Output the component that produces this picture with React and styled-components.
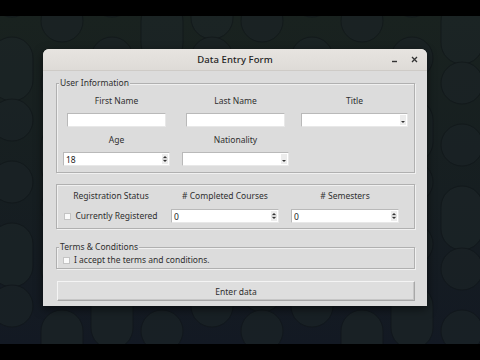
import React from "react";
import styled, { createGlobalStyle } from "styled-components";

const Global = createGlobalStyle`
  html, body { margin: 0; padding: 0; background: #000; }
  body { font-family: "Noto Sans", "Open Sans", sans-serif; }
`;

const Page = styled.div`
  width: 480px;
  height: 360px;
  display: flex;
  flex-direction: column;
  background: #000;
  overflow: hidden;
`;

const Band = styled.div`
  height: ${(p) => p.$h}px;
  background: #000;
  flex: none;
`;

const Desktop = styled.div`
  position: relative;
  flex: 1;
  background: linear-gradient(180deg, #19221f 0%, #161e21 55%, #131923 100%);
  padding: 33px 0 0 43px;
  overflow: hidden;
`;

const Wallpaper = styled.svg`
  position: absolute;
  inset: 0;
  width: 100%;
  height: 100%;
`;

const Window = styled.div`
  position: relative;
  width: 384px;
  height: 257px;
  background: #dcdcdc;
  border-radius: 6px 6px 0 0;
  box-shadow: 0 3px 10px rgba(0, 0, 0, 0.55);
  display: flex;
  flex-direction: column;
  color: #2f2f2f;
`;

const TitleBar = styled.div`
  height: 21px;
  flex: none;
  display: grid;
  grid-template-columns: 1fr auto 1fr;
  align-items: center;
  background: linear-gradient(180deg, #e7e4e0, #dedbd7);
  border-bottom: 1px solid #cecbc7;
  border-radius: 6px 6px 0 0;
`;

const Title = styled.div`
  grid-column: 2;
  font-size: 9.5px;
  font-weight: 500;
  color: #1e1e1e;
  letter-spacing: 0.1px;
`;

const Controls = styled.div`
  grid-column: 3;
  justify-self: end;
  display: flex;
  align-items: center;
  gap: 13px;
  padding-right: 9px;
`;

const Body = styled.div`
  flex: 1;
  display: flex;
  flex-direction: column;
  padding: 12px 12px 0 13px;
  font-size: 8.5px;
`;

const Frame = styled.div`
  position: relative;
  border: 1px solid #b0b0b0;
  box-shadow: inset 1px 1px 0 #f0f0f0, 1px 1px 0 #f0f0f0;
  height: ${(p) => p.$h}px;
  margin-top: ${(p) => p.$mt || 0}px;
  box-sizing: border-box;
`;

const Legend = styled.span`
  position: absolute;
  left: 2px;
  top: -7px;
  line-height: 12px;
  padding: 0 1px;
  background: #dcdcdc;
  font-size: 8.5px;
  color: #2f2f2f;
`;

const Grid = styled.div`
  display: grid;
  grid-template-columns: ${(p) => p.$cols};
  grid-template-rows: ${(p) => p.$rows};
  row-gap: ${(p) => p.$gap}px;
  padding-top: ${(p) => p.$pt}px;
  justify-items: center;
  align-items: center;
`;

const Label = styled.div`
  font-size: 8.5px;
  line-height: 12px;
  color: #2f2f2f;
`;

const Entry = styled.div`
  width: ${(p) => p.$w}px;
  height: ${(p) => p.$h || 14}px;
  box-sizing: border-box;
  background: #fff;
  border: 1px solid #b9b9b9;
  border-right-color: #e8e8e8;
  border-bottom-color: #e8e8e8;
  display: flex;
  align-items: center;
  position: relative;
  font-size: 8.5px;
  color: #222;
  padding-left: 2px;
`;

const ArrowBox = styled.div`
  position: absolute;
  right: 1px;
  top: 1px;
  bottom: 1px;
  width: 6px;
  background: #ececec;
  display: flex;
  flex-direction: column;
  align-items: center;
  justify-content: ${(p) => (p.$spin ? "center" : "flex-end")};
`;

const CheckRow = styled.div`
  display: flex;
  align-items: center;
  gap: 4px;
  justify-self: ${(p) => (p.$start ? "start" : "center")};
  padding-left: ${(p) => p.$pl || 0}px;
`;

const Box = styled.span`
  width: 7px;
  height: 7px;
  background: #fafafa;
  border: 1px solid #c4c4c4;
  box-sizing: border-box;
  display: inline-block;
`;

const Button = styled.div`
  margin-top: 12px;
  margin-left: 1px;
  height: 20px;
  box-sizing: border-box;
  background: #dedede;
  border: 1px solid #a8a8a8;
  border-top-color: #f4f4f4;
  border-left-color: #f4f4f4;
  box-shadow: inset -1px -1px 0 #c6c6c6;
  display: flex;
  align-items: center;
  justify-content: center;
  font-size: 8.5px;
  color: #2f2f2f;
`;

function SpinArrows() {
  return (
    <ArrowBox $spin>
      <svg width="6" height="10" viewBox="0 0 6 10">
        <path d="M1 4 L3 2 L5 4 Z" fill="#333" />
        <path d="M0.5 5 H5.5" stroke="#999" strokeWidth="0.6" />
        <path d="M1 6 L3 8 L5 6 Z" fill="#333" />
      </svg>
    </ArrowBox>
  );
}

function ComboArrow() {
  return (
    <ArrowBox>
      <svg width="6" height="6" viewBox="0 0 6 6">
        <path d="M1 2 L3 4 L5 2 Z" fill="#333" />
      </svg>
    </ArrowBox>
  );
}

function Field({ w, h, value, kind }) {
  return (
    <Entry $w={w} $h={h}>
      {value}
      {kind === "spin" && <SpinArrows />}
      {kind === "combo" && <ComboArrow />}
    </Entry>
  );
}

function Paper() {
  const shapes = [];
  const cols = [12, 62, 112, 162, 212, 262, 312, 362, 412, 462];
  cols.forEach((x, i) => {
    const off = i % 2 === 0 ? 0 : 25;
    for (let y = -20 + off; y < 360; y += 62) {
      const capsule = (i + Math.floor(y / 62)) % 3 === 0;
      shapes.push(
        capsule ? (
          <rect key={`${x}-${y}`} x={x - 21} y={y - 21} width="42" height="64" rx="21" fill="#1c2527" stroke="#11171a" strokeWidth="1" />
        ) : (
          <circle key={`${x}-${y}`} cx={x} cy={y} r="21" fill="#1b2326" stroke="#11171a" strokeWidth="1" />
        )
      );
    }
  });
  return (
    <Wallpaper viewBox="0 0 480 328" preserveAspectRatio="none">
      <g opacity="0.7">{shapes}</g>
    </Wallpaper>
  );
}

export default function App() {
  return (
    <>
      <Global />
      <Page>
        <Band $h={16} />
        <Desktop>
          <Paper />
          <Window>
            <TitleBar>
              <Title>Data Entry Form</Title>
              <Controls>
                <svg width="7" height="7" viewBox="0 0 7 7">
                  <path d="M1 5.5 H6" stroke="#333" strokeWidth="1.4" />
                </svg>
                <svg width="7" height="7" viewBox="0 0 7 7">
                  <path d="M1 1 L6 6 M6 1 L1 6" stroke="#333" strokeWidth="1.3" />
                </svg>
              </Controls>
            </TitleBar>
            <Body>
              <Frame $h={90}>
                <Legend>User Information</Legend>
                <Grid $cols="119px 119px 119px" $rows="13px 14px 13px 14px" $gap={6} $pt={10}>
                  <Label>First Name</Label>
                  <Label>Last Name</Label>
                  <Label>Title</Label>
                  <Field w={99} />
                  <Field w={99} />
                  <Field w={107} kind="combo" />
                  <Label>Age</Label>
                  <Label>Nationality</Label>
                  <span />
                  <Field w={107} value="18" kind="spin" />
                  <Field w={107} kind="combo" />
                  <span />
                </Grid>
              </Frame>
              <Frame $h={45} $mt={11}>
                <Grid $cols="108px 120px 120px" $rows="12px 14px" $gap={7} $pt={5}>
                  <Label>Registration Status</Label>
                  <Label># Completed Courses</Label>
                  <Label># Semesters</Label>
                  <CheckRow>
                    <Box />
                    <Label>Currently Registered</Label>
                  </CheckRow>
                  <Field w={108} value="0" kind="spin" />
                  <Field w={108} value="0" kind="spin" />
                </Grid>
              </Frame>
              <Frame $h={22} $mt={18}>
                <Legend>Terms &amp; Conditions</Legend>
                <Grid $cols="1fr" $rows="14px" $gap={0} $pt={5}>
                  <CheckRow $start $pl={6}>
                    <Box />
                    <Label>I accept the terms and conditions.</Label>
                  </CheckRow>
                </Grid>
              </Frame>
              <Button>Enter data</Button>
            </Body>
          </Window>
        </Desktop>
        <Band $h={16} />
      </Page>
    </>
  );
}
